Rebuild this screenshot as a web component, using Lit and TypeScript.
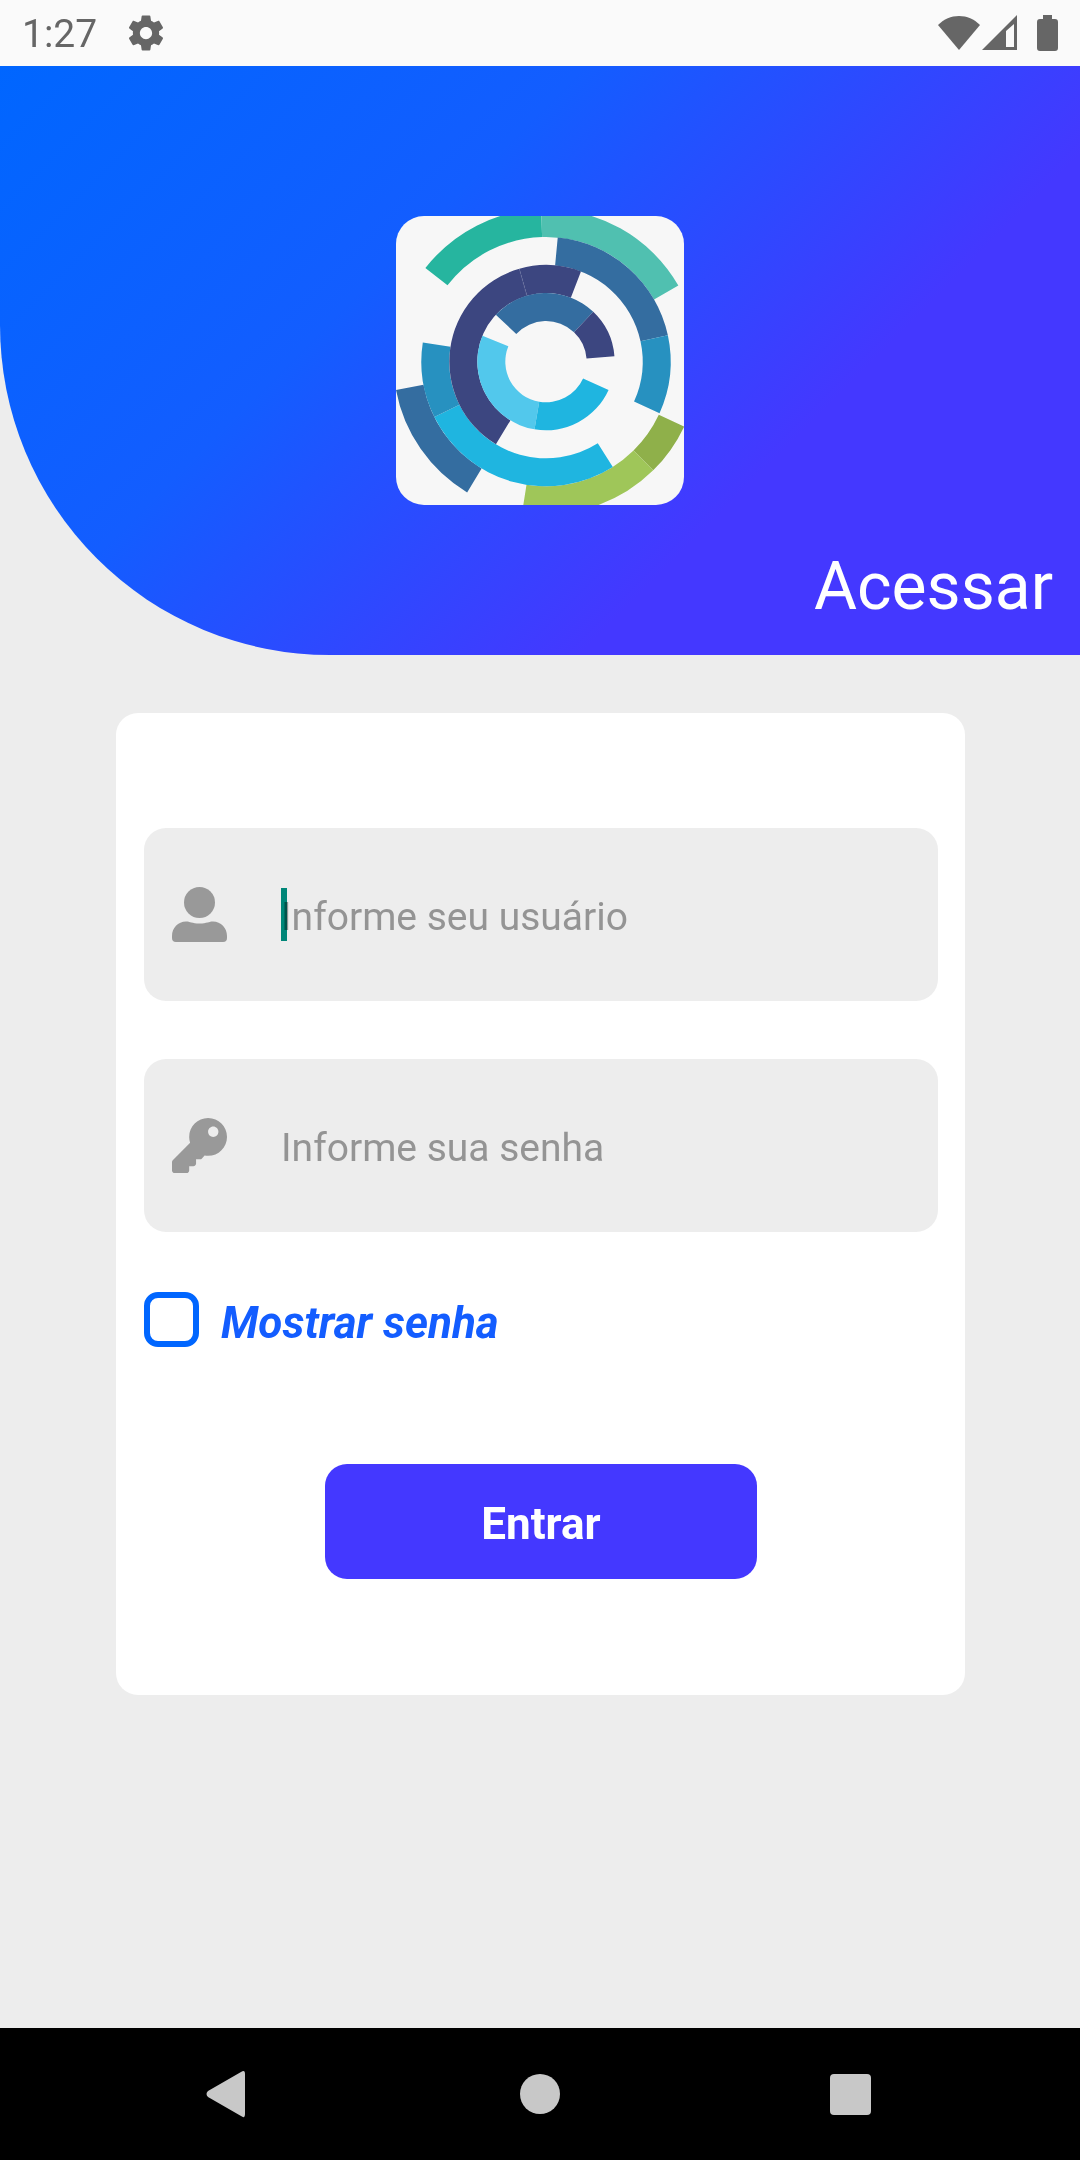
import { LitElement, html, svg, css } from "lit";
import { customElement, state } from "lit/decorators.js";

type Arc = { inner: number; from: number; to: number; color: string };

const CENTER_X = 480;
const CENTER_Y = 467;
const RING = 84;

const ARCS: Arc[] = [
  { inner: 374, from: 121.1, to: 169.3, color: "#346da0" },
  { inner: 374, from: 217.8, to: 268.2, color: "#26b59f" },
  { inner: 374, from: 268.2, to: 330.1, color: "#50c0b0" },
  { inner: 374, from: 25.2, to: 45.4, color: "#8fb04a" },
  { inner: 374, from: 45.4, to: 99, color: "#9fc659" },
  { inner: 290, from: 275.4, to: 347.8, color: "#346da0" },
  { inner: 290, from: 347.8, to: 384.4, color: "#2791c0" },
  { inner: 290, from: 57.6, to: 153.6, color: "#1fb5e0" },
  { inner: 290, from: 153.6, to: 188.8, color: "#2791c0" },
  { inner: 206, from: 121.2, to: 254, color: "#3c4680" },
  { inner: 206, from: 254, to: 291.2, color: "#3c4680" },
  { inner: 122, from: 223, to: 313.5, color: "#346da0" },
  { inner: 122, from: 313.5, to: 355.4, color: "#3c4680" },
  { inner: 122, from: 99.6, to: 202.2, color: "#52c8ec" },
  { inner: 122, from: 24.3, to: 99.6, color: "#1fb5e0" },
];

function arcPath({ inner, from, to }: Arc): string {
  const outer = inner + RING;
  const at = (r: number, deg: number) => {
    const a = (deg * Math.PI) / 180;
    return `${(CENTER_X + r * Math.cos(a)).toFixed(1)} ${(CENTER_Y + r * Math.sin(a)).toFixed(1)}`;
  };
  const large = to - from > 180 ? 1 : 0;
  return `M${at(outer, from)}A${outer} ${outer} 0 ${large} 1 ${at(outer, to)}L${at(inner, to)}A${inner} ${inner} 0 ${large} 0 ${at(inner, from)}Z`;
}

@customElement("status-bar")
class StatusBar extends LitElement {
  static styles = css`
    :host {
      display: flex;
      align-items: center;
      height: 66px;
      padding: 0 22px;
      box-sizing: border-box;
      background: #fafafa;
      color: #666;
      font-size: 39px;
      line-height: 44px;
    }
    .time { padding-top: 2px; }
    .gear { width: 42px; height: 42px; margin-left: 28px; }
    .system { display: flex; align-items: center; margin-left: auto; }
    .wifi { width: 42px; height: 36px; }
    .signal { width: 36px; height: 36px; margin-left: 2px; }
    .battery { width: 21px; height: 36px; margin-left: 19px; }
    svg { display: block; fill: currentColor; }
  `;

  render() {
    return html`
      <span class="time">1:27</span>
      <svg class="gear" viewBox="0 0 24 24" aria-hidden="true">
        <path d="M19.43 12.98c.04-.32.07-.64.07-.98s-.03-.66-.07-.98l2.11-1.65c.19-.15.24-.42.12-.64l-2-3.46c-.12-.22-.39-.3-.61-.22l-2.49 1c-.52-.4-1.08-.73-1.69-.98l-.38-2.65C14.46 2.18 14.25 2 14 2h-4c-.25 0-.46.18-.49.42l-.38 2.65c-.61.25-1.17.59-1.69.98l-2.49-1c-.23-.09-.49 0-.61.22l-2 3.46c-.13.22-.07.49.12.64l2.11 1.65c-.04.32-.07.65-.07.98s.03.66.07.98l-2.11 1.65c-.19.15-.24.42-.12.64l2 3.46c.12.22.39.3.61.22l2.49-1c.52.4 1.08.73 1.69.98l.38 2.65c.03.24.24.42.49.42h4c.25 0 .46-.18.49-.42l.38-2.65c.61-.25 1.17-.59 1.69-.98l2.49 1c.23.09.49 0 .61-.22l2-3.46c.12-.22.07-.49-.12-.64l-2.11-1.65zM12 15.5c-1.930 0-3.500-1.570-3.500-3.500s1.570-3.500 3.500-3.500 3.500 1.570 3.500 3.500-1.570 3.500-3.500 3.500z" />
      </svg>
      <div class="system">
        <svg class="wifi" viewBox="0 0 42 36" aria-hidden="true">
          <path d="M21 35 0 10C6 4 13 1 21 1s15 3 21 9z" />
        </svg>
        <svg class="signal" viewBox="0 0 36 36" aria-hidden="true">
          <path fill-rule="evenodd" d="M0 35 35 0V35zM24 16V32H32V9z" />
        </svg>
        <svg class="battery" viewBox="0 0 21 36" aria-hidden="true">
          <path d="M6 0H15V4H18Q21 4 21 7V33Q21 36 18 36H3Q0 36 0 33V7Q0 4 3 4H6z" />
        </svg>
      </div>
    `;
  }
}

@customElement("brand-logo")
class BrandLogo extends LitElement {
  static styles = css`
    :host {
      display: block;
      width: 288px;
      height: 289px;
      overflow: hidden;
      border-radius: 28px;
      background: #f7f7f7;
    }
    svg { display: block; width: 100%; height: 100%; }
    .seam { stroke: #6a72a0; stroke-width: 1; }
  `;

  render() {
    return html`
      <svg viewBox="30 30 864 867" role="img" aria-label="Logo">
        ${ARCS.map((arc) => svg`<path d=${arcPath(arc)} fill=${arc.color} />`)}
        <path class="seam" d="M400 189 422 269" />
      </svg>
    `;
  }
}

@customElement("nav-bar")
class NavBar extends LitElement {
  static styles = css`
    :host {
      display: grid;
      grid-template-columns: repeat(3, 310px);
      justify-content: center;
      align-items: center;
      height: 132px;
      background: #000;
    }
    button {
      display: flex;
      justify-content: center;
      padding: 0;
      border: 0;
      background: none;
    }
    svg { display: block; width: 48px; height: 48px; fill: #c8c8c8; }
  `;

  render() {
    return html`
      <button aria-label="Voltar">
        <svg viewBox="0 0 48 48"><path d="M2 21 35 2Q39 -1 39 4V44Q39 49 35 46L2 27Q-1 24 2 21z" /></svg>
      </button>
      <button aria-label="Início">
        <svg viewBox="0 0 48 48"><circle cx="24" cy="24" r="20" /></svg>
      </button>
      <button aria-label="Recentes">
        <svg viewBox="0 0 48 48"><rect x="4" y="4" width="41" height="41" rx="4" /></svg>
      </button>
    `;
  }
}

@customElement("app-root")
class AppRoot extends LitElement {
  static styles = css`
    :host {
      display: flex;
      flex-direction: column;
      min-height: 100vh;
      background: #ededed;
      font-family: Roboto, "Liberation Sans", sans-serif;
    }
    * { box-sizing: border-box; }
    header {
      display: flex;
      flex-direction: column;
      align-items: center;
      justify-content: space-between;
      padding: 150px 27px 28px;
      height: 589px;
      border-bottom-left-radius: 330px;
      background: linear-gradient(135deg, #0066ff, #135dff 35%, #4438ff 70%);
    }
    h1 {
      align-self: flex-end;
      margin: 0;
      color: #fff;
      font-size: 66px;
      font-weight: 400;
      line-height: 80px;
    }
    main { flex: 1; padding: 58px 115px 58px 116px; }
    form {
      display: flex;
      flex-direction: column;
      padding: 115px 27px 116px 28px;
      border-radius: 22px;
      background: #fff;
    }
    .field {
      position: relative;
      display: flex;
      align-items: center;
      height: 173px;
      margin-bottom: 58px;
      padding: 0 28px;
      border-radius: 22px;
      background: #ededed;
    }
    .icon { display: block; flex: none; width: 55px; height: 55px; fill: #999; }
    .field input {
      flex: 1;
      min-width: 0;
      margin-left: 54px;
      padding: 4px 0 0;
      border: 0;
      outline: 0;
      background: none;
      color: #333;
      font: 400 39px/50px Roboto, "Liberation Sans", sans-serif;
    }
    .field input::placeholder { color: #949494; opacity: 1; }
    .caret {
      position: absolute;
      left: 137px;
      top: 60px;
      width: 6px;
      height: 53px;
      background: #009081;
      mix-blend-mode: multiply;
    }
    .show {
      display: flex;
      align-items: center;
      align-self: flex-start;
      gap: 22px;
      margin: 2px 0 117px;
      color: #135dff;
      font-size: 44px;
      font-style: italic;
      font-weight: 700;
      line-height: 48px;
    }
    .show span { padding-top: 6px; }
    .show input {
      appearance: none;
      width: 55px;
      height: 55px;
      margin: 0;
      border: 6px solid #0066ff;
      border-radius: 14px;
      background: #fff;
    }
    .show input:checked { background: #0066ff; }
    .submit {
      align-self: center;
      width: 432px;
      height: 115px;
      padding: 4px 0 0;
      border: 0;
      border-radius: 22px;
      background: #4438ff;
      color: #fff;
      font: 700 44px/52px Roboto, "Liberation Sans", sans-serif;
    }
  `;

  @state() private reveal = false;

  private toggleReveal(event: Event) {
    this.reveal = (event.target as HTMLInputElement).checked;
  }

  render() {
    return html`
      <status-bar></status-bar>
      <header>
        <brand-logo></brand-logo>
        <h1>Acessar</h1>
      </header>
      <main>
        <form @submit=${(event: Event) => event.preventDefault()}>
          <label class="field">
            <svg class="icon" viewBox="0 0 55 55" aria-hidden="true">
              <circle cx="27.500" cy="15.500" r="15.500" />
              <path d="M14 34.500C18 34.500 20 36.500 27.500 36.500S37 34.500 41 34.500C49 34.500 55 41 55 49V51Q55 55 51 55H4Q0 55 0 51V49C0 41 6 34.500 14 34.500z" />
            </svg>
            <input type="text" aria-label="Usuário" placeholder="Informe seu usuário" />
            <span class="caret"></span>
          </label>
          <label class="field">
            <svg class="icon" viewBox="0 0 512 512" aria-hidden="true">
              <path d="M512 176.001C512 273.203 433.202 352 336 352c-11.220 0-22.190-1.062-32.827-3.069l-24.012 27.014A23.999 23.999 0 0 1 261.223 384H224v40c0 13.255-10.745 24-24 24h-40v40c0 13.255-10.745 24-24 24H24c-13.255 0-24-10.745-24-24v-78.059c0-6.365 2.529-12.470 7.029-16.971l161.802-161.802C163.108 213.814 160 195.271 160 176 160 78.798 238.797.001 335.999 0 433.488-.001 512 78.511 512 176.001zM336 128c0 26.510 21.490 48 48 48s48-21.490 48-48-21.490-48-48-48-48 21.490-48 48z" />
            </svg>
            <input type=${this.reveal ? "text" : "password"} aria-label="Senha" placeholder="Informe sua senha" />
          </label>
          <label class="show">
            <input type="checkbox" .checked=${this.reveal} @change=${this.toggleReveal} />
            <span>Mostrar senha</span>
          </label>
          <button class="submit" type="submit">Entrar</button>
        </form>
      </main>
      <nav-bar></nav-bar>
    `;
  }
}
